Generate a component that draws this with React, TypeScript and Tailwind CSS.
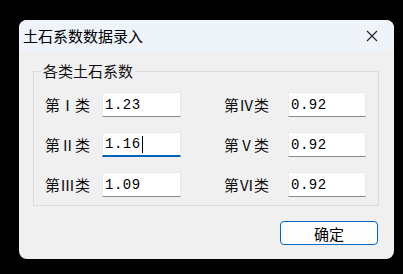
import React from "react";

const cjk = { fontFamily: '"Noto Sans CJK SC", "Noto Sans", sans-serif' };
const mono = { fontFamily: '"Liberation Mono", "DejaVu Sans Mono", monospace' };

function Field({ value, focused }: { value: string; focused?: boolean }) {
  return (
    <div
      className={
        "h-[25px] bg-white flex items-center pl-[2px] border border-[#e9e9e9] " +
        (focused ? "border-b-2 border-b-[#005fb8]" : "border-b-[#8a8a8a]")
      }
    >
      <span className="text-[14px] leading-none text-black tracking-[0.5px]" style={mono}>
        {value}
      </span>
      {focused && <span className="w-px h-[17px] bg-black ml-px" />}
    </div>
  );
}

function Row({ l, lv, r, rv, focused }: { l: string; lv: string; r: string; rv: string; focused?: boolean }) {
  return (
    <div className="flex items-center h-[25px]">
      <div className="w-[57px] text-[15px] leading-none text-[#111]" style={cjk}>
        {l}
      </div>
      <div className="w-[79px]">
        <Field value={lv} focused={focused} />
      </div>
      <div className="w-[107px] text-right pr-[19px] text-[15px] leading-none text-[#111]" style={cjk}>
        {r}
      </div>
      <div className="w-[78px]">
        <Field value={rv} />
      </div>
    </div>
  );
}

export default function App() {
  return (
    <div className="w-[403px] h-[274px] bg-black pt-[20px] pl-[19px]" style={cjk}>
      <div className="w-[375px] h-[239px] rounded-[8px] overflow-hidden bg-[#f0f0f0] flex flex-col">
        <div className="h-[31px] bg-[#eef4f9] flex items-center justify-between pl-[4px] pr-[16px]">
          <span className="text-[15px] text-black leading-none" style={cjk}>
            土石系数数据录入
          </span>
          <svg width="12" height="12" viewBox="0 0 12 12">
            <path d="M1 1 L11 11 M11 1 L1 11" stroke="#222" strokeWidth="1.1" fill="none" />
          </svg>
        </div>
        <div className="flex-1 flex flex-col pl-[14px] pr-[15px] pt-[20px]">
          <div className="relative border border-[#dcdcdc] h-[135px] pt-[20px] pl-[11px]">
            <span
              className="absolute left-[7px] top-[-10px] bg-[#f0f0f0] px-[2px] text-[15px] leading-[18px] text-[#111]"
              style={cjk}
            >
              各类土石系数
            </span>
            <div className="flex flex-col gap-[15px]">
              <Row l="第Ⅰ类" lv="1.23" r="第Ⅳ类" rv="0.92" />
              <Row l="第Ⅱ类" lv="1.16" r="第Ⅴ类" rv="0.92" focused />
              <Row l="第Ⅲ类" lv="1.09" r="第Ⅵ类" rv="0.92" />
            </div>
          </div>
          <div className="flex justify-end mt-[15px] pr-[1px]">
            <button
              className="w-[98px] h-[24px] rounded-[4px] border border-[#0067c0] bg-[#fdfdfd] text-[15px] leading-none text-black flex items-center justify-center"
              style={cjk}
            >
              确定
            </button>
          </div>
        </div>
      </div>
    </div>
  );
}
